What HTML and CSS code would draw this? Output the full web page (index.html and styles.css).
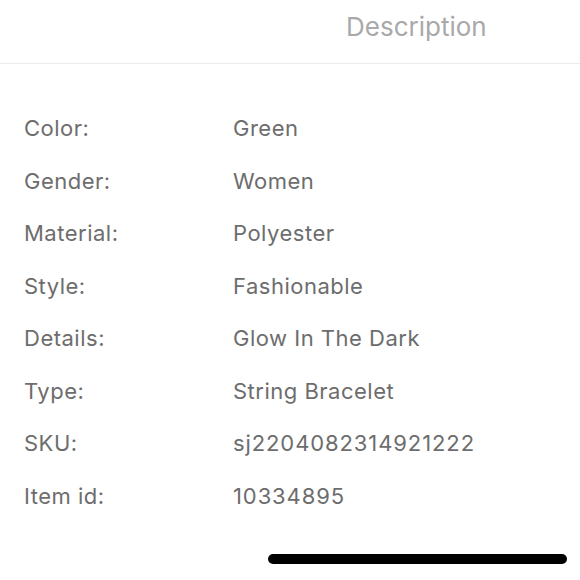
FILE: index.html
```html
<!DOCTYPE html>
<html>
<head>
<meta charset="utf-8">
<link rel="stylesheet" href="styles.css">
</head>
<body>
<div class="page">
  <header class="header"><span class="title">Description</span></header>
  <div class="specs">
    <div class="row"><span class="label">Color:</span><span class="value">Green</span></div>
    <div class="row"><span class="label">Gender:</span><span class="value">Women</span></div>
    <div class="row"><span class="label">Material:</span><span class="value">Polyester</span></div>
    <div class="row"><span class="label">Style:</span><span class="value">Fashionable</span></div>
    <div class="row"><span class="label">Details:</span><span class="value">Glow In The Dark</span></div>
    <div class="row"><span class="label">Type:</span><span class="value">String Bracelet</span></div>
    <div class="row"><span class="label">SKU:</span><span class="value numeric">sj2204082314921222</span></div>
    <div class="row"><span class="label">Item id:</span><span class="value numeric">10334895</span></div>
  </div>
  <div class="home"><div class="indicator"></div></div>
</div>
</body>
</html>
```
FILE: styles.css
```css
html, body {
  margin: 0;
  padding: 0;
  background: #fff;
}
.page {
  width: 580px;
  height: 580px;
  overflow: hidden;
  font-family: Inter, "Liberation Sans", Arial, sans-serif;
  display: flex;
  flex-direction: column;
}
.header {
  height: 64px;
  border-bottom: 1px solid #ebebeb;
  display: flex;
  align-items: center;
  padding-left: 346px;
  padding-bottom: 10px;
  box-sizing: border-box;
}
.title {
  font-size: 26px;
  color: #a9a9a9;
}
.specs {
  padding: 38px 0 0 24px;
  display: flex;
  flex-direction: column;
}
.row {
  height: 52.5px;
  display: flex;
  align-items: center;
  font-size: 22px;
  color: #6d6d6d;
  letter-spacing: 0.5px;
}
.label {
  width: 209px;
}
.numeric {
  letter-spacing: 0.9px;
}
.home {
  margin-top: auto;
  height: 26px;
  display: flex;
  justify-content: flex-end;
  padding-right: 13px;
}
.indicator {
  width: 299px;
  height: 10px;
  border-radius: 5px;
  background: #000;
}
```
